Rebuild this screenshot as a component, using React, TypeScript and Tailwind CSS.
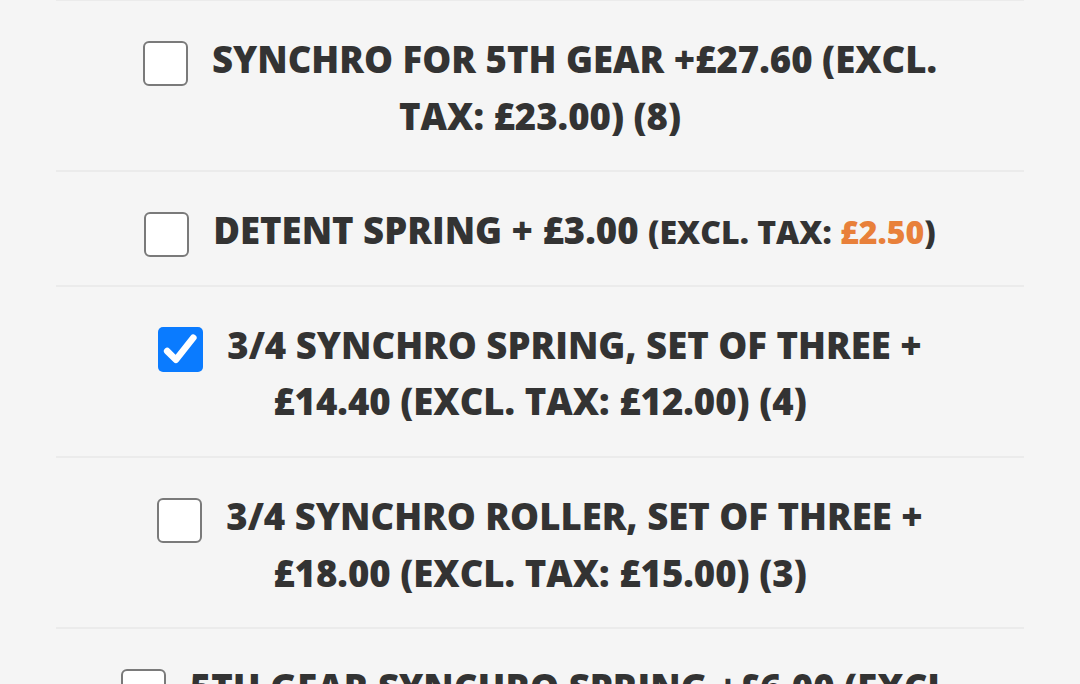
import React from 'react';

type Option = {
  id: string;
  checked?: boolean;
  label: React.ReactNode;
};

const CheckIcon = () => (
  <svg viewBox="0 0 44 44" className="w-full h-full">
    <path d="M9 23.5 L17.5 32 L34.5 10.5" fill="none" stroke="#ffffff" strokeWidth="6.5" strokeLinecap="round" strokeLinejoin="round" />
  </svg>
);

const Checkbox = ({ checked }: { checked?: boolean }) =>
  checked ? (
    <span className="inline-block align-middle w-[45px] h-[45px] mr-6 rounded-[5px] bg-[#0a7bff]">
      <CheckIcon />
    </span>
  ) : (
    <span className="inline-block align-middle w-[45px] h-[45px] mr-6 rounded-[6px] bg-white border-[2.5px] border-[#7a7a7a]" />
  );

const options: Option[] = [
  { id: 'synchro-5th', label: 'SYNCHRO FOR 5TH GEAR +£27.60 (EXCL. TAX: £23.00) (8)' },
  {
    id: 'detent',
    label: (
      <>
        DETENT SPRING + £3.00{' '}
        <span className="text-[32px] leading-none">
          (EXCL. TAX: <span className="text-[#e8803a]">£2.50</span>)
        </span>
      </>
    ),
  },
  { id: 'spring-34', checked: true, label: '3/4 SYNCHRO SPRING, SET OF THREE + £14.40 (EXCL. TAX: £12.00) (4)' },
  { id: 'roller-34', label: '3/4 SYNCHRO ROLLER, SET OF THREE + £18.00 (EXCL. TAX: £15.00) (3)' },
  { id: 'spring-5th', label: '5TH GEAR SYNCHRO SPRING +£6.00 (EXCL. TAX: £5.00) (2)' },
];

export default function App() {
  return (
    <div
      className="h-[684px] overflow-hidden bg-[#f5f5f5] text-[#333333]"
      style={{ fontFamily: '"Open Sans", "Noto Sans", sans-serif' }}
    >
      <div className="mx-14">
        <div className="-mt-px border-b-2 border-[#ebebeb]" />
        {options.map((opt) => (
          <label
            key={opt.id}
            className="block border-b-2 border-[#ebebeb] px-[50px] pt-[30px] pb-[26px] text-center text-[36.5px] leading-[56.6px] font-extrabold uppercase"
          >
            <Checkbox checked={opt.checked} />
            {opt.label}
          </label>
        ))}
      </div>
    </div>
  );
}
